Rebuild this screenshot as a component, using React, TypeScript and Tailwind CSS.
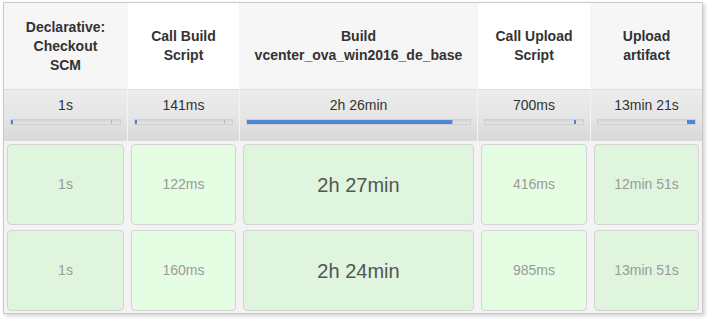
const stages = [
  { name: ["Declarative:", "Checkout", "SCM"], avg: "1s", w: "w-[123px]", head: "bg-[#f6f6f6]", cell: "bg-[#dff5dd]", fill: { l: 0, w: 1 }, runs: ["1s", "1s"] },
  { name: ["Call Build", "Script"], avg: "141ms", w: "w-[112px]", head: "bg-white", cell: "bg-[#e5fde3]", fill: { l: 0, w: 1 }, runs: ["122ms", "160ms"] },
  { name: ["Build", "vcenter_ova_win2016_de_base"], avg: "2h 26min", w: "w-[238px]", head: "bg-[#f6f6f6]", cell: "bg-[#dff5dd]", fill: { l: 0, w: 92 }, runs: ["2h 27min", "2h 24min"], big: true },
  { name: ["Call Upload", "Script"], avg: "700ms", w: "w-[113px]", head: "bg-white", cell: "bg-[#e5fde3]", fill: { l: 91, w: 1 }, runs: ["416ms", "985ms"] },
  { name: ["Upload", "artifact"], avg: "13min 21s", w: "w-[112px]", head: "bg-[#f6f6f6]", cell: "bg-[#dff5dd]", fill: { l: 92, w: 8 }, runs: ["12min 51s", "13min 51s"] },
];

export default function App() {
  return (
    <div className="w-[709px] h-[320px] bg-white pl-[3px] pt-[2px] font-['Liberation_Sans',Arial,sans-serif]">
      <div className="inline-flex border border-[#c9c9c9] shadow-[2px_2px_4px_rgba(0,0,0,0.18)] bg-[#f3f3f3]">
        {stages.map((s, i) => (
          <div key={i} className={`${s.w} flex flex-col ${i > 0 ? "border-l border-[#f4f4f4]" : ""}`}>
            <div className={`h-[86px] flex items-center justify-center text-center text-[14px] leading-[19px] font-bold text-[#333] ${s.head}`}>
              <div>
                {s.name.map((l, j) => (
                  <div key={j}>{l}</div>
                ))}
              </div>
            </div>
            <div className="h-[52px] border-t border-[#dedede] bg-gradient-to-b from-[#ececec] via-[#e6e6e6] to-[#d8d8d8] px-[6px] pt-[7px]">
              <div className="text-center text-[14px] leading-[16px] text-[#333]">{s.avg}</div>
              <div className="relative mt-[6px] h-[6px] border border-[#cfcfcf] bg-gradient-to-b from-[#d6d6d6] to-[#e6e6e6]">
                <div className="absolute top-0 bottom-0 left-[92%] w-px bg-[#b8b8b8]" />
                <div
                  className="absolute top-0 bottom-0 bg-[#4f84d8]"
                  style={{ left: `${s.fill.l}%`, width: s.fill.w < 2 ? "2px" : `${s.fill.w}%` }}
                />
              </div>
            </div>
            {s.runs.map((r, j) => (
              <div key={j} className="h-[86px] p-[3px] pb-[2px]">
                <div
                  className={`h-full rounded-[4px] border border-[#d4d4d4] flex items-center justify-center ${s.cell} ${
                    s.big ? "text-[20px] text-[#555]" : "text-[14px] text-[#9a9a9a]"
                  }`}
                >
                  {r}
                </div>
              </div>
            ))}
          </div>
        ))}
      </div>
    </div>
  );
}
